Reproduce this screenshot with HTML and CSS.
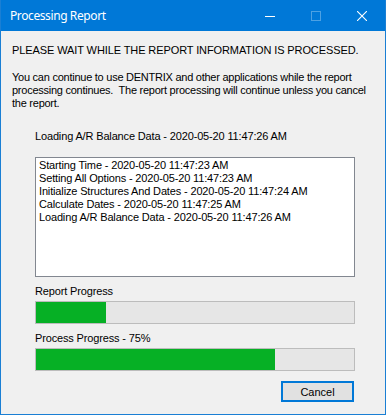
FILE: index.html
```html
<!DOCTYPE html>
<html lang="en">
<head>
  <meta charset="UTF-8" />
  <title>Processing Report</title>
  <link rel="stylesheet" href="styles.css">
</head>
<body>
  <div class="window">
    <!-- title bar -->
    <div class="titlebar">
      <span class="title">Processing Report</span>
      <div class="controls">
        <span class="ctl"><svg width="10" height="10" viewBox="0 0 10 10"><path d="M0 5.5H10" stroke="#fff" stroke-width="1"/></svg></span>
        <span class="ctl disabled"><svg width="10" height="10" viewBox="0 0 10 10"><rect x="0.5" y="0.5" width="9" height="9" fill="none" stroke="#fff" stroke-width="1"/></svg></span>
        <span class="ctl"><svg width="10" height="10" viewBox="0 0 10 10"><path d="M0 0L10 10M10 0L0 10" stroke="#fff" stroke-width="1.1"/></svg></span>
      </div>
    </div>

    <div class="content">
      <p class="headline">PLEASE WAIT WHILE THE REPORT INFORMATION IS PROCESSED.</p>
      <p class="info">You can continue to use DENTRIX and other applications while the report<br>processing continues.&nbsp; The report processing will continue unless you cancel<br>the report.</p>

      <div class="inner">
        <p class="status">Loading A/R Balance Data - 2020-05-20 11:47:26 AM</p>
        <ul class="log">
          <li>Starting Time - 2020-05-20 11:47:23 AM</li>
          <li>Setting All Options - 2020-05-20 11:47:23 AM</li>
          <li>Initialize Structures And Dates - 2020-05-20 11:47:24 AM</li>
          <li>Calculate Dates - 2020-05-20 11:47:25 AM</li>
          <li>Loading A/R Balance Data - 2020-05-20 11:47:26 AM</li>
        </ul>

        <p class="bar-label">Report Progress</p>
        <div class="bar"><div class="fill" style="width: 22%"></div></div>

        <p class="bar-label">Process Progress - 75%</p>
        <div class="bar"><div class="fill" style="width: 75%"></div></div>

        <div class="actions">
          <button class="btn">Cancel</button>
        </div>
      </div>
    </div>
  </div>
</body>
</html>
```

FILE: styles.css
```css
:root {
  --accent: #0078d7;
  --face: #f0f0f0;
  --text: #000;
  --bar-bg: #e6e6e6;
  --bar-border: #bcbcbc;
  --bar-fill: #06b025;
}
* {
  box-sizing: border-box;
  margin: 0;
  padding: 0;
}
body {
  font-family: 'Liberation Sans', Arial, sans-serif;
  font-size: 11px;
  line-height: 13px;
  letter-spacing: -0.15px;
  color: var(--text);
  background: var(--face);
}
.window {
  width: 386px;
  height: 415px;
  border: 1px solid #1a7fd4;
  border-top: none;
  background: var(--face);
  display: flex;
  flex-direction: column;
}
.titlebar {
  height: 31px;
  background: var(--accent);
  display: flex;
  align-items: center;
  justify-content: space-between;
  flex-shrink: 0;
}
.title {
  font-family: 'Noto Sans', 'Open Sans', sans-serif;
  font-size: 12px;
  letter-spacing: -0.4px;
  color: #fff;
  padding-left: 9px;
  padding-bottom: 1px;
}
.controls {
  display: flex;
  height: 100%;
}
.ctl {
  width: 46px;
  display: flex;
  align-items: center;
  justify-content: center;
}
.ctl.disabled svg {
  opacity: 0.3;
}
.content {
  padding: 13px 0 0 11px;
  white-space: nowrap;
}
.headline {
  letter-spacing: -0.1px;
}
.info {
  margin-top: 14px;
  letter-spacing: -0.25px;
}
.inner {
  padding-left: 23px;
  width: 343px;
}
.status {
  margin-top: 20px;
}
.log {
  list-style: none;
  margin-top: 14px;
  height: 120px;
  background: #fff;
  border: 1px solid #828790;
  padding: 1px 3px;
}
.bar-label {
  margin-top: 8px;
}
.bar {
  margin-top: 3px;
  height: 23px;
  background: var(--bar-bg);
  border: 1px solid var(--bar-border);
}
.fill {
  height: 100%;
  background: var(--bar-fill);
}
.actions {
  display: flex;
  justify-content: flex-end;
  margin-top: 10px;
  padding-right: 1px;
}
.btn {
  width: 73px;
  height: 21px;
  font-family: 'Liberation Sans', Arial, sans-serif;
  font-size: 11px;
  color: var(--text);
  background: #e1e1e1;
  border: 2px solid var(--accent);
}
```
